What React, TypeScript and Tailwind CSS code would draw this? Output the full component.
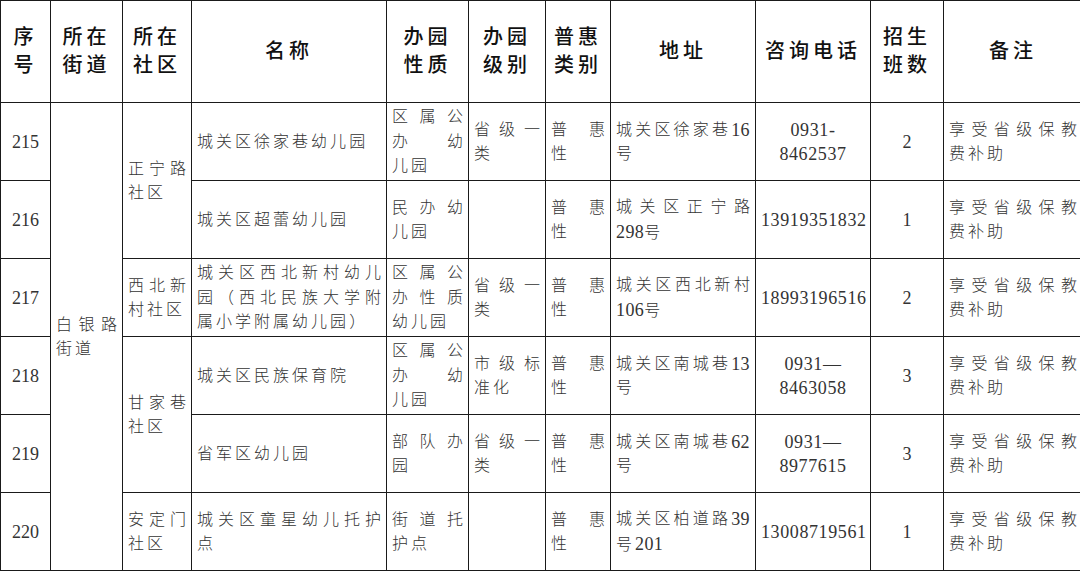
import React from "react";

const FONT = "font-['Liberation_Serif','Noto_Sans_CJK_SC',serif]";

function tokens(s: string): string[] {
  const out: string[] = [];
  let buf = "";
  for (const ch of Array.from(s)) {
    if (/[0-9A-Za-z\-—]/.test(ch)) {
      buf += ch;
    } else {
      if (buf) {
        out.push(buf);
        buf = "";
      }
      out.push(ch);
    }
  }
  if (buf) out.push(buf);
  return out;
}

function Tok({ t }: { t: string }) {
  if (/^[0-9A-Za-z\-—]+$/.test(t)) {
    return <span className="text-[18px] font-normal tracking-[0.4px]">{t}</span>;
  }
  return <span>{t}</span>;
}

function J({ lines }: { lines: string[] }) {
  return (
    <div className="leading-[24.5px] pt-[2px]">
      {lines.map((l, i) =>
        i < lines.length - 1 ? (
          <div key={i} className="flex justify-between">
            {tokens(l).map((t, k) => (
              <Tok key={k} t={t} />
            ))}
          </div>
        ) : (
          <div key={i} className="tracking-[3px] whitespace-nowrap">
            {tokens(l).map((t, k) => (
              <Tok key={k} t={t} />
            ))}
          </div>
        )
      )}
    </div>
  );
}

function Center({ lines }: { lines: string[] }) {
  return (
    <div className="text-center leading-[24.5px] text-[18px] font-normal tracking-[0.6px] pt-[2px]">
      {lines.map((l, i) => (
        <div key={i}>{l}</div>
      ))}
    </div>
  );
}

const th =
  "border-[1.5px] border-[#1a1a1a] text-center align-middle font-medium text-[20px] leading-[28px] tracking-[4px] text-[#111] p-0";
const td =
  "border-[1.5px] border-[#1a1a1a] align-middle px-[5px] py-0 text-[16px] font-light text-[#333]";

type Row = {
  no: string;
  name: string[];
  nature: string[];
  level: string[];
  type: string[];
  addr: string[];
  phone: string[];
  count: string;
};

const rows: Row[] = [
  {
    no: "215",
    name: ["城关区徐家巷幼儿园"],
    nature: ["区属公", "办幼", "儿园"],
    level: ["省级一", "类"],
    type: ["普惠", "性"],
    addr: ["城关区徐家巷16", "号"],
    phone: ["0931-", "8462537"],
    count: "2",
  },
  {
    no: "216",
    name: ["城关区超蕾幼儿园"],
    nature: ["民办幼", "儿园"],
    level: [],
    type: ["普惠", "性"],
    addr: ["城关区正宁路", "298号"],
    phone: ["13919351832"],
    count: "1",
  },
  {
    no: "217",
    name: ["城关区西北新村幼儿", "园（西北民族大学附", "属小学附属幼儿园）"],
    nature: ["区属公", "办性质", "幼儿园"],
    level: ["省级一", "类"],
    type: ["普惠", "性"],
    addr: ["城关区西北新村", "106号"],
    phone: ["18993196516"],
    count: "2",
  },
  {
    no: "218",
    name: ["城关区民族保育院"],
    nature: ["区属公", "办幼", "儿园"],
    level: ["市级标", "准化"],
    type: ["普惠", "性"],
    addr: ["城关区南城巷13", "号"],
    phone: ["0931—", "8463058"],
    count: "3",
  },
  {
    no: "219",
    name: ["省军区幼儿园"],
    nature: ["部队办", "园"],
    level: ["省级一", "类"],
    type: ["普惠", "性"],
    addr: ["城关区南城巷62", "号"],
    phone: ["0931—", "8977615"],
    count: "3",
  },
  {
    no: "220",
    name: ["城关区童星幼儿托护", "点"],
    nature: ["街道托", "护点"],
    level: [],
    type: ["普惠", "性"],
    addr: ["城关区柏道路39", "号201"],
    phone: ["13008719561"],
    count: "1",
  },
];

const community: Record<number, { span: number; lines: string[] }> = {
  0: { span: 2, lines: ["正宁路", "社区"] },
  2: { span: 1, lines: ["西北新", "村社区"] },
  3: { span: 2, lines: ["甘家巷", "社区"] },
  5: { span: 1, lines: ["安定门", "社区"] },
};

export default function App() {
  const widths = [50, 72, 69, 195, 82, 77, 65, 145, 115, 73, 139];
  return (
    <div className={`w-[1080px] h-[572px] overflow-hidden bg-white ${FONT}`}>
      <table className="table-fixed border-collapse w-[1082px] -mt-[0.5px]">
        <colgroup>
          {widths.map((w, i) => (
            <col key={i} style={{ width: w }} />
          ))}
        </colgroup>
        <thead>
          <tr className="h-[102px]">
            <th className={th}>
              <div>序</div>
              <div>号</div>
            </th>
            <th className={th}>
              <div>所在</div>
              <div>街道</div>
            </th>
            <th className={th}>
              <div>所在</div>
              <div>社区</div>
            </th>
            <th className={th}>名称</th>
            <th className={th}>
              <div>办园</div>
              <div>性质</div>
            </th>
            <th className={th}>
              <div>办园</div>
              <div>级别</div>
            </th>
            <th className={th}>
              <div>普惠</div>
              <div>类别</div>
            </th>
            <th className={th}>地址</th>
            <th className={th}>咨询电话</th>
            <th className={th}>
              <div>招生</div>
              <div>班数</div>
            </th>
            <th className={th}>备注</th>
          </tr>
        </thead>
        <tbody>
          {rows.map((r, i) => (
            <tr key={r.no} className="h-[78px]">
              <td className={`${td} text-center`}>
                <span className="text-[18px] font-normal block pt-[2px]">{r.no}</span>
              </td>
              {i === 0 && (
                <td className={td} rowSpan={6}>
                  <J lines={["白银路", "街道"]} />
                </td>
              )}
              {community[i] && (
                <td className={td} rowSpan={community[i].span}>
                  <J lines={community[i].lines} />
                </td>
              )}
              <td className={td}>
                <J lines={r.name} />
              </td>
              <td className={td}>
                <J lines={r.nature} />
              </td>
              <td className={td}>{r.level.length > 0 && <J lines={r.level} />}</td>
              <td className={td}>
                <J lines={r.type} />
              </td>
              <td className={td}>
                <J lines={r.addr} />
              </td>
              <td className={`${td} px-0`}>
                <Center lines={r.phone} />
              </td>
              <td className={`${td} text-center`}>
                <span className="text-[18px] font-normal block pt-[2px]">{r.count}</span>
              </td>
              <td className={td}>
                <J lines={["享受省级保教", "费补助"]} />
              </td>
            </tr>
          ))}
        </tbody>
      </table>
    </div>
  );
}
